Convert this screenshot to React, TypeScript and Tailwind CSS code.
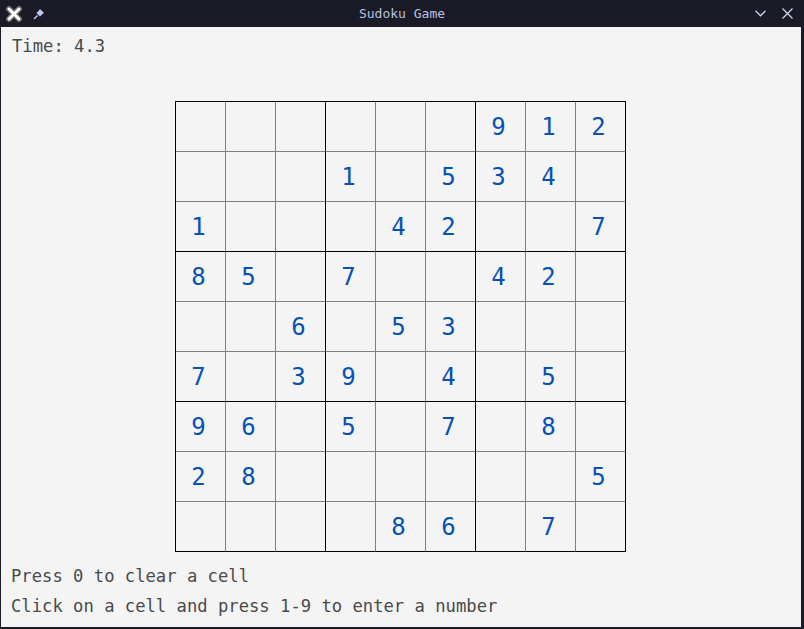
import React from "react";

const puzzle: number[][] = [
  [0, 0, 0, 0, 0, 0, 9, 1, 2],
  [0, 0, 0, 1, 0, 5, 3, 4, 0],
  [1, 0, 0, 0, 4, 2, 0, 0, 7],
  [8, 5, 0, 7, 0, 0, 4, 2, 0],
  [0, 0, 6, 0, 5, 3, 0, 0, 0],
  [7, 0, 3, 9, 0, 4, 0, 5, 0],
  [9, 6, 0, 5, 0, 7, 0, 8, 0],
  [2, 8, 0, 0, 0, 0, 0, 0, 5],
  [0, 0, 0, 0, 8, 6, 0, 7, 0],
];

const mono = { fontFamily: '"DejaVu Sans Mono", "Liberation Mono", monospace' };

function TitleBar() {
  return (
    <div className="h-[27px] flex items-center justify-between relative px-[5px]">
      <div className="flex items-center gap-[10px]">
        {/* app logo */}
        <svg width="18" height="18" viewBox="0 0 18 18">
          <path d="M4 4 L14 14 M14 4 L4 14" stroke="#6b6b6b" strokeWidth="6" strokeLinecap="round" />
          <path d="M4 4 L14 14 M14 4 L4 14" stroke="#ffffff" strokeWidth="3" strokeLinecap="round" />
        </svg>
        {/* pin */}
        <svg width="12" height="12" viewBox="0 0 12 12">
          <path d="M7 1 L11 5 L9.5 6 L7 8.5 L3.5 5 L6 2.5 Z" fill="#c0caf5" />
          <path d="M4.5 7.5 L1 11" stroke="#c0caf5" strokeWidth="1.4" />
        </svg>
      </div>
      <div
        className="absolute left-0 right-0 text-center text-[13px] text-[#b8c0e0] pointer-events-none"
        style={mono}
      >
        Sudoku Game
      </div>
      <div className="flex items-center gap-[16px] pr-[6px]">
        <svg width="11" height="7" viewBox="0 0 11 7">
          <path d="M0.5 0.8 L5.5 5.8 L10.5 0.8" stroke="#d0d4e8" strokeWidth="1.3" fill="none" />
        </svg>
        <svg width="11" height="11" viewBox="0 0 11 11">
          <path d="M0.5 0.5 L10.5 10.5 M10.5 0.5 L0.5 10.5" stroke="#d0d4e8" strokeWidth="1.3" />
        </svg>
      </div>
    </div>
  );
}

function Board() {
  return (
    <div className="border-l border-t border-black w-[451px] flex flex-col">
      {puzzle.map((row, r) => (
        <div key={r} className="flex">
          {row.map((v, c) => (
            <div
              key={c}
              className={`w-[50px] h-[50px] border-r border-b flex items-center justify-center text-[24px] text-[#0652b4] ${
                c % 3 === 2 ? "border-r-black" : "border-r-[#808080]"
              } ${r % 3 === 2 ? "border-b-black" : "border-b-[#808080]"}`}
              style={mono}
            >
              {v !== 0 ? <span className="-ml-[4px]">{v}</span> : null}
            </div>
          ))}
        </div>
      ))}
    </div>
  );
}

export default function App() {
  return (
    <div className="w-[804px] h-[629px] bg-[#1a1b26] overflow-hidden">
      <TitleBar />
      <div className="ml-[1px] w-[800px] h-[600px] bg-[#f4f4f4] flex flex-col text-[#4a4a4a]" style={mono}>
        <div className="pl-[11px] pt-[9px] h-[29px] leading-[20px] text-[17.2px]">Time: 4.3</div>
        <div className="mt-[45px] flex justify-center pr-[1px]">
          <Board />
        </div>
        <div className="mt-[14px] pl-[10px] text-[17.2px] leading-[20px]">
          <div>Press 0 to clear a cell</div>
          <div className="mt-[10px]">Click on a cell and press 1-9 to enter a number</div>
        </div>
      </div>
    </div>
  );
}
